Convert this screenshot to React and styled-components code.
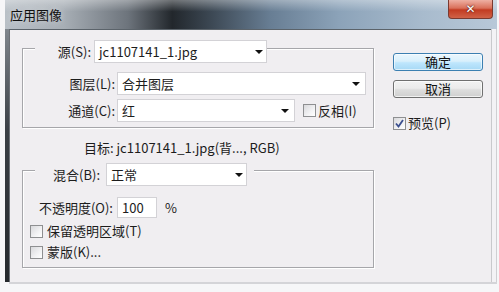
import React from "react";
import styled, { createGlobalStyle } from "styled-components";

const Global = createGlobalStyle`
  html, body { margin: 0; padding: 0; background: #f6f6f8; }
  body {
    font-family: "Noto Sans CJK SC", "Noto Sans", sans-serif;
    font-size: 13px;
    color: #1c1c1c;
  }
`;

const Page = styled.div`
  width: 499px;
  height: 292px;
  overflow: hidden;
  background: #f6f6f8;
`;

const Window = styled.div`
  margin-left: 5px;
  width: 492px;
  display: flex;
  flex-direction: column;
`;

const TitleBar = styled.div`
  height: 29px;
  display: flex;
  align-items: flex-start;
  justify-content: space-between;
  background:
    linear-gradient(180deg, rgba(255,255,255,0.35) 0%, rgba(255,255,255,0) 40%),
    linear-gradient(90deg, #b9c0c7 0%, #a7aeb5 12%, #6d747c 25%, #22272c 34%, #39444f 41%, #687e94 54%, #8ca3b9 68%, #a8bbcd 85%, #b8c8d8 100%);
`;

const Title = styled.div`
  padding: 6px 0 0 5px;
  font-size: 13px;
  line-height: 18px;
  color: #111;
  text-shadow: 0 0 6px rgba(255,255,255,0.6);
`;

const CloseButton = styled.div`
  width: 45px;
  height: 19px;
  margin-right: 4px;
  border: 1px solid #7a3a30;
  border-top: none;
  border-radius: 0 0 4px 4px;
  box-sizing: border-box;
  background: linear-gradient(180deg, #eeb0a3 0%, #d9705a 45%, #c23b22 55%, #d06247 100%);
  display: flex;
  align-items: center;
  justify-content: center;
  color: #fff;
  font-family: "DejaVu Sans", sans-serif;
  font-weight: bold;
  font-size: 12px;
  text-shadow: 0 0 2px #5a1a10, 0 0 1px #5a1a10;
`;

const Body = styled.div`
  display: flex;
  height: 253px;
`;

const LeftEdge = styled.div`
  width: 4px;
  background: linear-gradient(180deg, #7f868d 0%, #3a3f45 40%, #24282c 100%);
`;

const RightEdge = styled.div`
  width: 6px;
  box-sizing: border-box;
  border-left: 1px solid #c9c9cc;
  border-right: 1px solid #cfcfd2;
  background: #f3f2f5;
`;

const BottomEdge = styled.div`
  height: 2px;
  margin-left: 4px;
  background: #d4d4d8;
`;

const Client = styled.div`
  flex: 1;
  box-sizing: border-box;
  border-top: 1px solid #5b636a;
  border-left: 1px solid #6b7076;
  background: #f0eef1;
  padding: 18px 0 0 12px;
  display: flex;
  gap: 19px;
`;

const LeftColumn = styled.div`
  width: 352px;
  display: flex;
  flex-direction: column;
`;

const RightColumn = styled.div`
  width: 90px;
  margin-top: 5px;
  display: flex;
  flex-direction: column;
`;

const GroupBox = styled.div`
  box-sizing: border-box;
  width: ${(p) => p.$width}px;
  border: 1px solid #a6a6aa;
  box-shadow: inset 1px 1px 0 #ffffff, 1px 1px 0 #ffffff;
  padding-bottom: 5px;
  margin-top: ${(p) => p.$top || 0}px;
  display: flex;
  flex-direction: column;
`;

const Legend = styled.div`
  align-self: flex-start;
  margin: ${(p) => p.$lift}px 0 0 12px;
  padding: 0 ${(p) => p.$padRight || 0}px 0 0;
  background: #f0eef1;
  display: flex;
  align-items: center;
  height: 23px;
`;

const Row = styled.div`
  display: flex;
  align-items: center;
  height: ${(p) => p.$h || 23}px;
  margin-top: ${(p) => p.$top || 0}px;
  padding-left: ${(p) => p.$pad || 0}px;
`;

const Label = styled.span`
  width: ${(p) => p.$width}px;
  text-align: right;
  margin-right: ${(p) => p.$gap ?? 2}px;
  white-space: nowrap;
  line-height: 18px;
`;

const Combo = styled.div`
  box-sizing: border-box;
  width: ${(p) => p.$width}px;
  height: ${(p) => p.$h || 23}px;
  background: #ffffff;
  border: 1px solid #d3d2d6;
  display: flex;
  align-items: center;
  padding-left: 4px;
  white-space: nowrap;
  line-height: 18px;
`;

const Arrow = styled.span`
  margin-left: auto;
  margin-right: ${(p) => p.$right || 5}px;
  width: 0;
  height: 0;
  border-left: 4px solid transparent;
  border-right: 4px solid transparent;
  border-top: 4px solid #111;
`;

const Box = styled.span`
  box-sizing: border-box;
  width: 13px;
  height: 13px;
  border: 1px solid #8e8f91;
  background: linear-gradient(135deg, #d9d9dc 0%, #f2f2f4 60%, #ffffff 100%);
  margin-left: ${(p) => p.$left || 0}px;
  margin-right: ${(p) => p.$right ?? 3}px;
  display: flex;
  align-items: center;
  justify-content: center;
`;

const Text = styled.span`
  white-space: nowrap;
  line-height: 18px;
`;

const TargetRow = styled.div`
  height: 20px;
  margin-top: 9px;
  padding-left: 62px;
  display: flex;
  align-items: center;
  white-space: nowrap;
`;

const Button = styled.div`
  box-sizing: border-box;
  height: 18px;
  margin-bottom: 9px;
  border: 1px solid ${(p) => (p.$primary ? "#3c7fb1" : "#707070")};
  border-radius: 3px;
  box-shadow: inset 0 0 0 1px ${(p) => (p.$primary ? "rgba(255,255,255,0.6)" : "rgba(255,255,255,0.7)")};
  background: ${(p) =>
    p.$primary
      ? "linear-gradient(180deg, #eaf6fd 0%, #d9f0fc 45%, #bee6fd 55%, #a7d9f5 100%)"
      : "linear-gradient(180deg, #f2f2f2 0%, #ebebeb 45%, #dddddd 55%, #cfcfcf 100%)"};
  display: flex;
  align-items: center;
  justify-content: center;
  line-height: 16px;
  color: #111;
`;

const PreviewRow = styled.div`
  display: flex;
  align-items: center;
  height: 16px;
  margin-top: 8px;
`;

function Check({ checked, left, right }) {
  return (
    <Box $left={left} $right={right}>
      {checked && (
        <svg width="9" height="9" viewBox="0 0 9 9">
          <path d="M1 4.5 L3.5 7.5 L8 1" fill="none" stroke="#3b4f8f" strokeWidth="1.8" />
        </svg>
      )}
    </Box>
  );
}

export default function App() {
  return (
    <Page>
      <Global />
      <Window>
        <TitleBar>
          <Title>应用图像</Title>
          <CloseButton>✕</CloseButton>
        </TitleBar>
        <Body>
          <LeftEdge />
          <Client>
            <LeftColumn>
              <GroupBox $width={352}>
                <Legend $lift={-9}>
                  <Label $width={56} $gap={3}>源(S):</Label>
                  <Combo $width={173}>
                    jc1107141_1.jpg
                    <Arrow $right={3} />
                  </Combo>
                </Legend>
                <Row $top={9}>
                  <Label $width={92}>图层(L):</Label>
                  <Combo $width={249}>
                    合并图层
                    <Arrow $right={5} />
                  </Combo>
                </Row>
                <Row $top={4}>
                  <Label $width={92}>通道(C):</Label>
                  <Combo $width={178}>
                    红
                    <Arrow $right={5} />
                  </Combo>
                  <Check left={8} right={2} />
                  <Text>反相(I)</Text>
                </Row>
              </GroupBox>
              <TargetRow>目标: jc1107141_1.jpg(背..., RGB)</TargetRow>
              <GroupBox $width={352} $top={13}>
                <Legend $lift={-8} $padRight={7}>
                  <Label $width={65} $gap={6}>混合(B):</Label>
                  <Combo $width={141}>
                    正常
                    <Arrow $right={3} />
                  </Combo>
                </Legend>
                <Row $top={11} $h={21}>
                  <Label $width={90} $gap={4}>不透明度(O):</Label>
                  <Combo $width={40} $h={21}>100</Combo>
                  <Text style={{ marginLeft: 8 }}>%</Text>
                </Row>
                <Row $top={3} $h={20} $pad={7}>
                  <Check right={4} />
                  <Text>保留透明区域(T)</Text>
                </Row>
                <Row $top={1} $h={20} $pad={7}>
                  <Check right={4} />
                  <Text>蒙版(K)...</Text>
                </Row>
              </GroupBox>
            </LeftColumn>
            <RightColumn>
              <Button $primary>确定</Button>
              <Button>取消</Button>
              <PreviewRow>
                <Check checked right={2} />
                <Text>预览(P)</Text>
              </PreviewRow>
            </RightColumn>
          </Client>
          <RightEdge />
        </Body>
        <BottomEdge />
      </Window>
    </Page>
  );
}
